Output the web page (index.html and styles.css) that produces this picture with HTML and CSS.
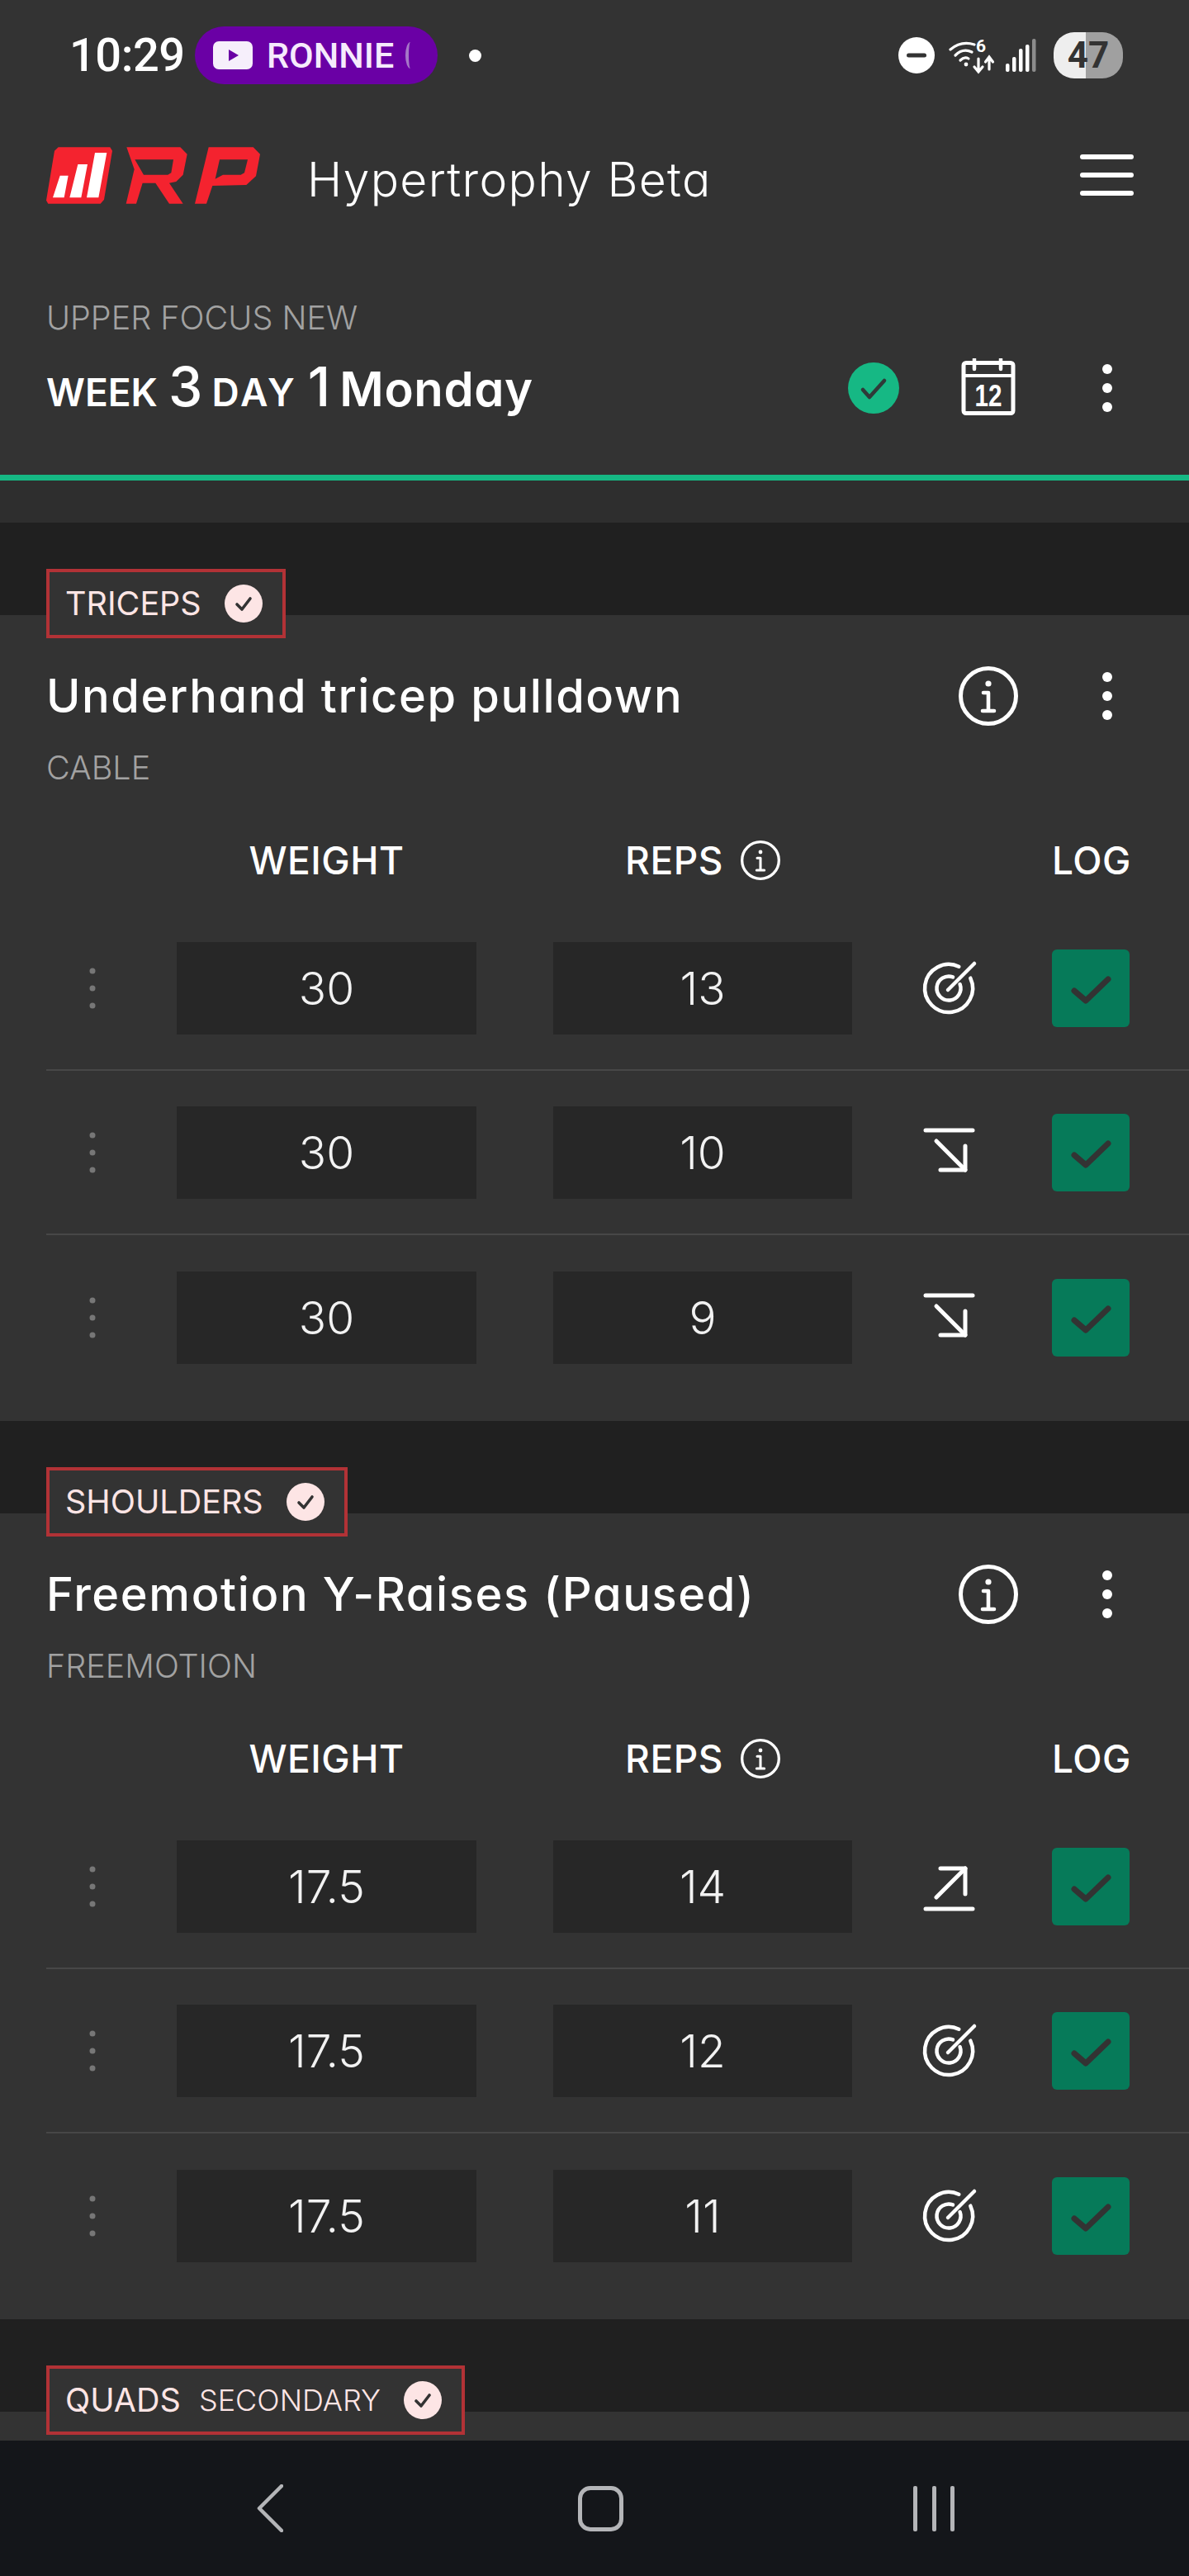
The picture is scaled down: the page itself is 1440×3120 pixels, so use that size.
FILE: index.html
```html
<!DOCTYPE html>
<html lang="en">
<head>
<meta charset="utf-8">
<title>RP Hypertrophy Beta</title>
<link rel="stylesheet" href="styles.css">
</head>
<body>
<svg class="defs" width="0" height="0" aria-hidden="true">
  <symbol id="kebab" viewBox="0 0 24 72"><circle cx="12" cy="13" r="6"/><circle cx="12" cy="36" r="6"/><circle cx="12" cy="59" r="6"/></symbol>
  <symbol id="handle" viewBox="0 0 8 50"><circle cx="4" cy="4" r="3.500"/><circle cx="4" cy="25" r="3.500"/><circle cx="4" cy="46" r="3.500"/></symbol>
  <symbol id="info" viewBox="0 0 72 72"><circle cx="36" cy="36" r="33.500" fill="none" stroke="currentColor" stroke-width="5"/><circle cx="36" cy="21" r="3.600" fill="currentColor"/><path d="M30 32h6v22M29 54h14" fill="none" stroke="currentColor" stroke-width="4.600" stroke-linecap="round" stroke-linejoin="round"/></symbol>
  <symbol id="target" viewBox="-36 -36 72 72"><g fill="none" stroke="currentColor" stroke-width="4.500" stroke-linecap="round"><path d="M12.300 -26.300A29 29 0 1 0 26.300 -12.300"/><path d="M5 -13.600A14.500 14.500 0 1 0 13.600 -5"/><path d="M-1 2L31 -30"/></g></symbol>
  <symbol id="down" viewBox="-36 -36 72 72"><g fill="none" stroke="currentColor" stroke-width="5" stroke-linecap="round" stroke-linejoin="round"><path d="M-28 -27H29"/><path d="M-15 -14L20 21"/><path d="M-10 21H20V-8"/></g></symbol>
  <symbol id="up" viewBox="-36 -36 72 72"><g fill="none" stroke="currentColor" stroke-width="5" stroke-linecap="round" stroke-linejoin="round"><path d="M-28 27H29"/><path d="M-15 13L20 -22"/><path d="M-10 -22H20V9"/></g></symbol>
  <symbol id="tick" viewBox="0 0 94 94"><path d="M27 50L41 62L68 36" fill="none" stroke="currentColor" stroke-width="7" stroke-linecap="round" stroke-linejoin="round"/></symbol>
  <symbol id="badge" viewBox="0 0 46 46"><circle cx="23" cy="23" r="23" fill="#fde5e5"/><path d="M15 24L21 30L31 17" fill="none" stroke="#333" stroke-width="3.600" stroke-linecap="round" stroke-linejoin="round"/></symbol>
</svg>

<div class="app">
  <header class="head">
    <div class="statusbar">
      <span class="time">10:29</span>
      <span class="pill">
        <svg class="yt" viewBox="0 0 48 34" aria-hidden="true"><rect width="48" height="34" rx="7" fill="#f6effb"/><path d="M19 10L31 17L19 24Z" fill="#6a00a5"/></svg>
        <span class="pill-text">RONNIE</span>
        <span class="crescent"></span>
      </span>
      <span class="notif-dot"></span>
      <svg class="dnd" viewBox="0 0 44 44" aria-hidden="true"><circle cx="22" cy="22" r="22" fill="#fff"/><rect x="10" y="19.500" width="24" height="5" rx="2.500" fill="#333"/></svg>
      <svg class="wifi" viewBox="0 -5 56 48" aria-hidden="true"><g fill="none" stroke="#fff" stroke-width="3.200" stroke-linecap="round"><path d="M2 12Q15 1 31 6"/><path d="M8 19Q17 10 28 15"/><path d="M14 25Q19 20 24 23"/><path d="M36 23V38M31 33L36 39L41 33"/><path d="M49 36V22M44.500 27L49 21L53.500 27"/></g><circle cx="21" cy="30" r="2.400" fill="#fff"/><text x="33" y="15" class="wifi-six">6</text></svg>
      <svg class="signal" viewBox="0 0 38 40" aria-hidden="true"><g fill="#fff"><rect x="0" y="30" width="4.500" height="10" rx="2"/><rect x="8" y="22" width="4.500" height="18" rx="2"/><rect x="16" y="12" width="4.500" height="28" rx="2"/><rect x="24" y="7" width="4.500" height="33" rx="2"/></g><rect x="32" y="0" width="4.500" height="40" rx="2" fill="#8c8c8c"/></svg>
      <span class="battery">47</span>
    </div>
    <div class="topbar">
      <svg class="logo" viewBox="0 0 840 255" aria-hidden="true">
        <path d="M62 25H250L258 38L228 215L215 230H25L18 218L48 38Z" fill="#f4232f"/>
        <path d="M195 45H238L208 208H165ZM133 87H168L145 208H103ZM68 128H98L83 208H42Z" fill="#fff"/>
        <path fill-rule="evenodd" d="M310 25H505L530 50L515 125L490 150L465 155L515 230H465L415 155H368L345 230H308L338 105ZM340 70L372 125H460L472 118L480 70Z" fill="#f4232f"/>
        <path fill-rule="evenodd" d="M608 25H770L795 50L780 130L745 162L622 165L600 230H558ZM648 70L632 140L660 125H725L738 118L750 70Z" fill="#f4232f"/>
      </svg>
      <span class="app-title">Hypertrophy Beta</span>
      <span class="burger"><i></i><i></i><i></i></span>
    </div>
    <div class="workout">
      <div class="workout-text">
        <div class="meso">UPPER FOCUS NEW</div>
        <div class="week"><span class="wk">WEEK</span> <span class="num">3</span> <span class="wk wk-day">DAY</span> <span class="num">1</span> <span class="day">Monday</span></div>
      </div>
      <div class="workout-actions">
        <svg class="done" viewBox="0 0 62 62" aria-hidden="true"><circle cx="31" cy="31" r="31" fill="#16b884"/><path d="M18 33L26 42L44 22" fill="none" stroke="#2f3a38" stroke-width="4.600" stroke-linecap="round" stroke-linejoin="round"/></svg>
        <svg class="calendar" viewBox="0 0 66 72" aria-hidden="true"><rect x="3" y="5.500" width="60" height="61" rx="3" fill="none" stroke="#fff" stroke-width="5"/><path d="M2 21H64" stroke="#fff" stroke-width="4"/><path d="M16 1V13M48 1V13" stroke="#fff" stroke-width="4.500" stroke-linecap="round"/><text x="33" y="58" text-anchor="middle" textLength="33" lengthAdjust="spacingAndGlyphs" class="cal-num">12</text></svg>
        <svg class="kebab"><use href="#kebab"/></svg>
      </div>
    </div>
  </header>

  <main class="scroll">
    <div class="shade"></div>

    <section class="group">
      <div class="band"></div>
      <div class="card">
        <div class="label"><span class="label-name">TRICEPS</span><svg class="label-check"><use href="#badge"/></svg></div>
        <div class="ex-head"><h2 class="ex-name">Underhand tricep pulldown</h2><svg class="ex-info"><use href="#info"/></svg><svg class="kebab ex-kebab"><use href="#kebab"/></svg></div>
        <div class="ex-type">CABLE</div>
        <div class="cols"><span class="col-weight">WEIGHT</span><span class="col-reps">REPS<svg class="small-info"><use href="#info"/></svg></span><span class="col-log">LOG</span></div>
        <div class="row"><svg class="handle"><use href="#handle"/></svg><span class="field">30</span><span class="field field-reps">13</span><span class="mark"><svg><use href="#target"/></svg></span><span class="logbox"><svg><use href="#tick"/></svg></span></div>
        <div class="row"><svg class="handle"><use href="#handle"/></svg><span class="field">30</span><span class="field field-reps">10</span><span class="mark"><svg><use href="#down"/></svg></span><span class="logbox"><svg><use href="#tick"/></svg></span></div>
        <div class="row"><svg class="handle"><use href="#handle"/></svg><span class="field">30</span><span class="field field-reps">9</span><span class="mark"><svg><use href="#down"/></svg></span><span class="logbox"><svg><use href="#tick"/></svg></span></div>
      </div>
    </section>

    <section class="group">
      <div class="band"></div>
      <div class="card">
        <div class="label"><span class="label-name">SHOULDERS</span><svg class="label-check"><use href="#badge"/></svg></div>
        <div class="ex-head"><h2 class="ex-name">Freemotion Y-Raises (Paused)</h2><svg class="ex-info"><use href="#info"/></svg><svg class="kebab ex-kebab"><use href="#kebab"/></svg></div>
        <div class="ex-type">FREEMOTION</div>
        <div class="cols"><span class="col-weight">WEIGHT</span><span class="col-reps">REPS<svg class="small-info"><use href="#info"/></svg></span><span class="col-log">LOG</span></div>
        <div class="row"><svg class="handle"><use href="#handle"/></svg><span class="field">17.5</span><span class="field field-reps">14</span><span class="mark"><svg><use href="#up"/></svg></span><span class="logbox"><svg><use href="#tick"/></svg></span></div>
        <div class="row"><svg class="handle"><use href="#handle"/></svg><span class="field">17.5</span><span class="field field-reps">12</span><span class="mark"><svg><use href="#target"/></svg></span><span class="logbox"><svg><use href="#tick"/></svg></span></div>
        <div class="row"><svg class="handle"><use href="#handle"/></svg><span class="field">17.5</span><span class="field field-reps">11</span><span class="mark"><svg><use href="#target"/></svg></span><span class="logbox"><svg><use href="#tick"/></svg></span></div>
      </div>
    </section>

    <section class="group">
      <div class="band"></div>
      <div class="card">
        <div class="label"><span class="label-name">QUADS</span><span class="label-sub">SECONDARY</span><svg class="label-check"><use href="#badge"/></svg></div>
      </div>
    </section>
  </main>

  <nav class="navbar">
    <svg class="nav-back" viewBox="0 0 32 58" aria-hidden="true"><path d="M30 2L3 29L30 56" fill="none" stroke="#b4b5b8" stroke-width="4.500" stroke-linecap="round" stroke-linejoin="round"/></svg>
    <span class="nav-home"></span>
    <span class="nav-recent"><i></i><i></i><i></i></span>
  </nav>
</div>
</body>
</html>
```

FILE: styles.css
```css
* { box-sizing: border-box; }
html, body { margin: 0; padding: 0; }
body { width: 1440px; height: 3120px; overflow: hidden; background: #333; color: #fff; font-family: Inter, "Noto Sans", sans-serif; font-feature-settings: "cv11" 1; }
.defs { position: absolute; }
.app { width: 1440px; height: 3120px; display: flex; flex-direction: column; }

/* status bar */
.head { flex: none; background: #333; border-bottom: 7px solid #16b884; }
.statusbar { height: 134px; display: flex; align-items: center; padding-left: 84px; }
.time { width: 152px; font-family: Roboto, sans-serif; font-size: 56px; font-weight: 500; letter-spacing: -.5px; font-feature-settings: normal; }
.pill { width: 294px; height: 70px; border-radius: 35px; background: #6a00a5; display: flex; align-items: center; padding-left: 22px; position: relative; }
.yt { width: 48px; height: 34px; flex: none; }
.pill-text { margin-left: 17px; font-family: Roboto, sans-serif; font-size: 43px; font-weight: 500; color: #f6eafc; }
.crescent { width: 12px; height: 32px; margin-left: 14px; border-left: 4px solid #a678c8; border-radius: 50%; }
.notif-dot { width: 15px; height: 15px; border-radius: 50%; background: #fff; margin-left: 38px; }
.dnd { width: 44px; height: 44px; margin-left: 505px; flex: none; }
.wifi { width: 56px; height: 48px; margin-left: 17px; flex: none; }
.wifi-six { font-family: Roboto, sans-serif; font-size: 21px; font-weight: 700; fill: #fff; }
.signal { width: 38px; height: 40px; margin-left: 13px; flex: none; }
.battery { width: 84px; height: 56px; margin-left: 20px; border-radius: 25px; background: linear-gradient(90deg, #eee 46%, #a0a0a0 46%); color: #333; font-family: Roboto, sans-serif; font-size: 44px; font-weight: 700; display: flex; align-items: center; justify-content: center; }

/* app bar */
.topbar { height: 156px; display: flex; align-items: center; padding-left: 50px; padding-right: 67px; }
.logo { width: 280px; height: 85px; flex: none; }
.app-title { margin-left: 42px; padding-top: 10px; font-size: 57px; font-weight: 300; letter-spacing: 1.300px; }
.burger { margin-left: auto; width: 65px; display: flex; flex-direction: column; gap: 16px; }
.burger i { display: block; height: 6px; border-radius: 3px; background: #fff; }

/* workout */
.workout { height: 285px; padding: 70px 0 0 56px; display: flex; }
.meso { height: 50px; line-height: 50px; font-size: 39.500px; font-weight: 300; color: #a2a2a2; }
.week { margin-top: 18px; height: 80px; line-height: 80px; font-size: 52px; font-weight: 600; white-space: nowrap; }
.wk { font-size: 46px; }
.wk-day { letter-spacing: 3px; }
.num { font-size: 66px; font-weight: 500; letter-spacing: -2px; }
.day { font-size: 58px; letter-spacing: .6px; }
.workout-actions { margin-left: auto; height: 80px; margin-top: 70px; display: flex; align-items: center; padding-right: 87px; }
.done { width: 62px; height: 62px; }
.calendar { width: 66px; height: 72px; margin-left: 75px; }
.cal-num { font-family: "Liberation Sans", sans-serif; font-size: 37px; font-weight: 700; fill: #fff; }
.kebab { width: 24px; height: 72px; fill: #fff; margin-left: 99px; }

/* scroll */
.scroll { flex: 1; min-height: 0; overflow: hidden; background: #333; }
.shade { height: 51px; background: #2e2e2e; }
.band { height: 112px; background: #202020; }
.card { display: flow-root; background: #333; padding: 0 0 26px 56px; }
.label { margin-top: -56px; position: relative; display: flex; width: fit-content; align-items: center; height: 84px; padding: 0 24px 0 19px; border: 4px solid #b23236; background: #333; color: #fde5e5; font-weight: 400; }
.label-name { font-size: 39.500px; }
.label-sub { font-size: 36px; font-weight: 300; margin-left: 22px; }
.label-check { width: 46px; height: 46px; margin-left: 28px; }
.ex-head { height: 80px; margin-top: 30px; display: flex; align-items: center; padding-right: 87px; }
.ex-name { flex: 1; margin: 0; font-size: 56px; font-weight: 450; letter-spacing: 1.600px; white-space: nowrap; }
.ex-info { width: 72px; height: 72px; color: #fff; }
.ex-kebab { margin-left: 96px; }
.ex-type { height: 50px; line-height: 50px; margin-top: 22px; font-size: 39.500px; font-weight: 300; color: #a2a2a2; }
.cols { height: 50px; margin-top: 62px; display: flex; align-items: center; font-size: 46px; font-weight: 450; letter-spacing: .5px; }
.col-weight { width: 363px; margin-left: 158px; text-align: center; }
.col-reps { width: 362px; margin-left: 93px; display: flex; align-items: center; justify-content: center; }
.small-info { width: 48px; height: 48px; margin-left: 21px; color: #fff; }
.col-log { width: 94px; margin-left: 242px; text-align: center; white-space: nowrap; }
.row { height: 199px; display: flex; align-items: center; border-bottom: 2px solid #474747; }
.cols + .row { margin-top: 31px; }
.row:last-child { border-bottom: 0; }
.handle { width: 8px; height: 50px; fill: #777; margin-left: 52px; margin-right: 98px; flex: none; }
.field { width: 363px; height: 112px; background: #272727; display: flex; align-items: center; justify-content: center; font-size: 55px; font-weight: 300; color: #f2f2f2; }
.field-reps { width: 362px; margin-left: 93px; }
.mark { width: 234px; display: flex; justify-content: center; color: #fff; }
.mark svg { width: 72px; height: 72px; display: block; }
.logbox { width: 94px; height: 94px; margin-left: 8px; border-radius: 6px; background: #067a59; color: #333; }
.logbox svg { width: 94px; height: 94px; display: block; }

/* nav */
.navbar { flex: none; height: 164px; background: #14161a; position: relative; display: flex; align-items: center; padding-left: 311px; }
.nav-back { width: 32px; height: 58px; }
.nav-home { width: 55px; height: 55px; margin-left: 357px; border: 5px solid #b4b5b8; border-radius: 15px; }
.nav-recent { width: 50px; height: 55px; margin-left: 351px; display: flex; justify-content: space-between; }
.nav-recent i { display: block; width: 5px; height: 55px; border-radius: 2px; background: #b4b5b8; }
```
